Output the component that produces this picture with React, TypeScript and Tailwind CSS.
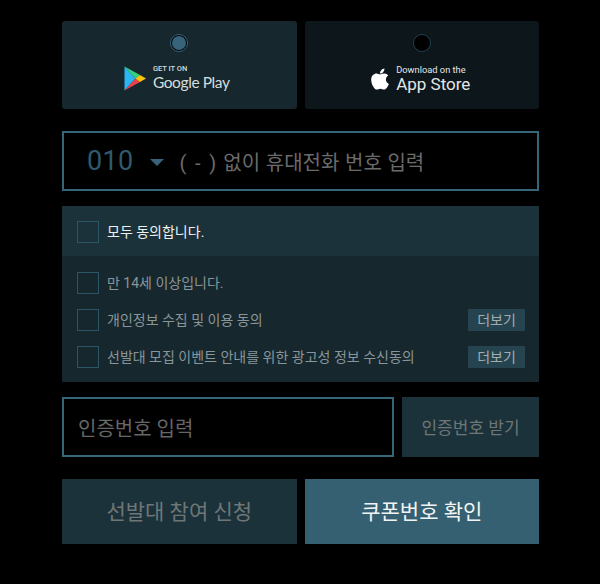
import { FaApple } from "react-icons/fa";

const FONT = "font-['Roboto','Noto_Sans_CJK_KR',sans-serif]";

function PlayLogo() {
  return (
    <svg width="22" height="25" viewBox="0 0 22 25" className="shrink-0">
      <path d="M0.5 0.5 L11.5 12.5 L0.5 24.5 Z" fill="#2bb6f0" />
      <path d="M0.5 0.5 L16 9 L11.5 12.5 Z" fill="#36d27a" />
      <path d="M0.5 24.5 L16 16 L11.5 12.5 Z" fill="#ec3f4c" />
      <path d="M16 9 L22 12.5 L16 16 L11.5 12.5 Z" fill="#fbc30a" />
    </svg>
  );
}

function StoreCard({
  selected,
  children,
}: {
  selected?: boolean;
  children: React.ReactNode;
}) {
  return (
    <div
      className={`flex h-[88px] flex-1 flex-col items-center rounded-[3px] pt-[13px] ${
        selected ? "bg-[#16282e]" : "bg-[#0c161b]"
      }`}
    >
      <div
        className={`flex size-[18px] items-center justify-center rounded-full border bg-black ${
          selected ? "border-[#36667a]" : "border-[#1f4050]"
        }`}
      >
        {selected && <div className="size-[14px] rounded-full bg-[#37647a]" />}
      </div>
      {children}
    </div>
  );
}

function CheckRow({ label, more }: { label: string; more?: boolean }) {
  return (
    <div className="flex h-[22px] items-center">
      <div className="size-[22px] shrink-0 border border-[#2b5564]" />
      <span className="ml-[8px] flex-1 text-[14px] leading-[20px] text-[#8a9599]">{label}</span>
      {more && (
        <button
          type="button"
          className="flex h-[22px] w-[57px] items-center justify-center bg-[#26444f] text-[14px] leading-[20px] text-[#a3adb0]"
        >
          더보기
        </button>
      )}
    </div>
  );
}

export default function App() {
  return (
    <div className={`min-h-[584px] bg-black px-[62px] pt-[21px] ${FONT}`}>
      <div className="flex w-[477px] flex-col">
        <div className="flex gap-[8px]">
          <StoreCard selected>
            <div className="mt-[13px] flex items-center gap-[7px] pr-[5px]">
              <PlayLogo />
              <div className="flex flex-col gap-[1px] text-[#d8dcdc]">
                <span className="text-[7.5px] leading-[8px] font-medium">GET IT ON</span>
                <span className="font-['Lato'] text-[15.5px] leading-[17px] tracking-[-0.4px]">
                  Google Play
                </span>
              </div>
            </div>
          </StoreCard>
          <StoreCard>
            <div className="mt-[13px] flex items-center gap-[4px] pr-[5px]">
              <FaApple className="size-[24px] text-white" />
              <div className="flex flex-col text-[#e4e6e6]">
                <span className="text-[9.3px] leading-[10px]">Download on the</span>
                <span className="text-[17px] leading-[18px]">App Store</span>
              </div>
            </div>
          </StoreCard>
        </div>

        <div className="mt-[22px] flex h-[60px] items-center border-2 border-[#36667a] bg-black pl-[23px]">
          <span className="pt-[1px] text-[27px] tracking-[0.3px] text-[#2f5a6e]">010</span>
          <div className="mt-[2px] ml-[17px] h-0 w-0 border-x-[7px] border-t-[7px] border-x-transparent border-t-[#37647a]" />
          <span className="ml-[15px] pt-[3px] text-[20px] [word-spacing:0.7px] text-[#6b6b6b]">
            <span className="tracking-[1.5px]">( - )</span> 없이 휴대전화 번호 입력
          </span>
        </div>

        <div className="mt-[15px] flex h-[176px] flex-col bg-[#16282e]">
          <div className="flex h-[50px] items-center bg-[#1c323a] pt-[2px] pl-[15px]">
            <div className="size-[22px] border border-[#2b5564]" />
            <span className="ml-[8px] text-[14px] text-[#eef0f0]">모두 동의합니다.</span>
          </div>
          <div className="flex flex-col gap-[15px] pt-[16px] pr-[14px] pl-[15px]">
            <CheckRow label="만 14세 이상입니다." />
            <CheckRow label="개인정보 수집 및 이용 동의" more />
            <CheckRow label="선발대 모집 이벤트 안내를 위한 광고성 정보 수신동의" more />
          </div>
        </div>

        <div className="mt-[15px] flex h-[60px] gap-[8px]">
          <div className="flex w-[332px] items-center border-2 border-[#36667a] bg-black pt-[3px] pl-[14px] text-[20px] text-[#666666]">
            인증번호 입력
          </div>
          <button
            type="button"
            className="flex-1 bg-[#1c323a] pt-[3px] text-[17px] text-[#6e7678]"
          >
            인증번호 받기
          </button>
        </div>

        <div className="mt-[22px] flex h-[65px] gap-[8px]">
          <button
            type="button"
            className="flex-1 bg-[#1c323a] pt-[2px] text-[21px] text-[#6e7678]"
          >
            선발대 참여 신청
          </button>
          <button
            type="button"
            className="flex-1 bg-[#356072] pt-[2px] text-[21px] text-[#f2f4f4]"
          >
            쿠폰번호 확인
          </button>
        </div>
      </div>
    </div>
  );
}
